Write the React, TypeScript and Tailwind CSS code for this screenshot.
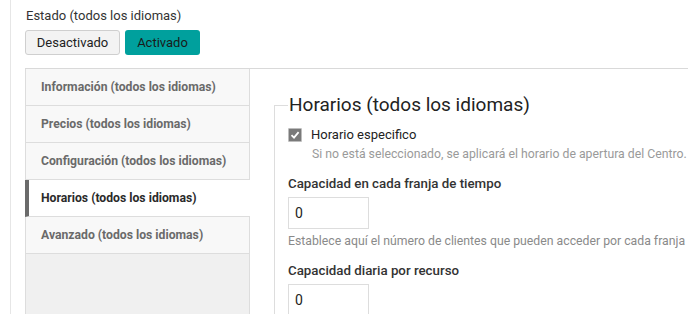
import React from "react";

const tabs = [
  "Información (todos los idiomas)",
  "Precios (todos los idiomas)",
  "Configuración (todos los idiomas)",
  "Horarios (todos los idiomas)",
  "Avanzado (todos los idiomas)",
];

export default function App() {
  return (
    <div
      className="w-[688px] h-[314px] overflow-hidden bg-white text-[#333]"
      style={{ fontFamily: "Roboto, 'Liberation Sans', sans-serif" }}
    >
      <div className="ml-[10px] h-full border-l border-[#e6e6e6] pl-[14px] pt-[7px] flex flex-col">
        <div className="text-[13px] leading-[18px] text-[#333] pl-[1px]">Estado (todos los idiomas)</div>
        <div className="mt-[5px] flex gap-[5px]">
          <button className="h-[25px] w-[95px] rounded-[3px] border border-[#cfcfcf] bg-[#f3f3f3] text-[13px] text-[#222]">
            Desactivado
          </button>
          <button className="h-[25px] w-[75px] rounded-[3px] bg-[#00a09d] text-[13px] text-[#1a1a1a]">
            Activado
          </button>
        </div>
        <div className="mt-[13px] flex flex-1 border-t border-[#d9d9d9] min-h-0">
          <div className="w-[225px] flex flex-col shrink-0">
            {tabs.map((t, i) =>
              i === 3 ? (
                <div
                  key={t}
                  className="h-[37px] flex items-center border-b border-l-4 border-b-[#dddddd] border-l-[#6b6b6b] bg-white pl-[12px] text-[12.2px] font-bold text-[#2a2a2a]"
                >
                  {t}
                </div>
              ) : (
                <div
                  key={t}
                  className="h-[37px] flex items-center border-b border-l border-r border-[#dddddd] bg-[#f8f8f8] pl-[15px] text-[12.2px] font-bold text-[#6a6a6a]"
                >
                  {t}
                </div>
              )
            )}
            <div className="flex-1 border-l border-r border-[#dddddd] bg-[#f0f0f0]" />
          </div>
          <div className="flex-1 pl-[24px] pt-[24px] min-w-0">
            <fieldset className="w-[500px] border-l border-t border-[#dddddd] pl-[13px]">
              <legend className="w-full px-[1px] text-[19px] leading-[24px] text-[#222]">
                Horarios (todos los idiomas)
              </legend>
              <div className="mt-[10px] flex items-center">
                <div className="w-[14px] h-[14px] rounded-[1px] bg-[#7a7a7a] border border-[#bdbdbd] flex items-center justify-center">
                  <svg width="10" height="10" viewBox="0 0 10 10">
                    <path d="M1.5 5.2 L4 7.6 L8.6 2.2" stroke="white" strokeWidth="1.8" fill="none" />
                  </svg>
                </div>
                <span className="ml-[9px] text-[13px] text-[#222] leading-[16px]">Horario especifico</span>
              </div>
              <div className="ml-[24px] mt-[3px] text-[12.25px] leading-[16px] text-[#9a9a9a] whitespace-nowrap">
                Si no está seleccionado, se aplicará el horario de apertura del Centro.
              </div>
              <div className="mt-[13px] text-[13.3px] leading-[18px] font-medium text-[#333]">
                Capacidad en cada franja de tiempo
              </div>
              <div className="mt-[4px] w-[81px] h-[32px] border border-[#dddddd] flex items-center pl-[6px] text-[14px] text-[#222]">
                0
              </div>
              <div className="mt-[4px] text-[12.25px] leading-[16px] text-[#8a8a8a] whitespace-nowrap">
                Establece aquí el número de clientes que pueden acceder por cada franja
              </div>
              <div className="mt-[13px] text-[13.3px] leading-[18px] font-medium text-[#333]">
                Capacidad diaria por recurso
              </div>
              <div className="mt-[4px] w-[81px] h-[32px] border border-[#dddddd] flex items-center pl-[6px] text-[14px] text-[#222]">
                0
              </div>
            </fieldset>
          </div>
        </div>
      </div>
    </div>
  );
}
